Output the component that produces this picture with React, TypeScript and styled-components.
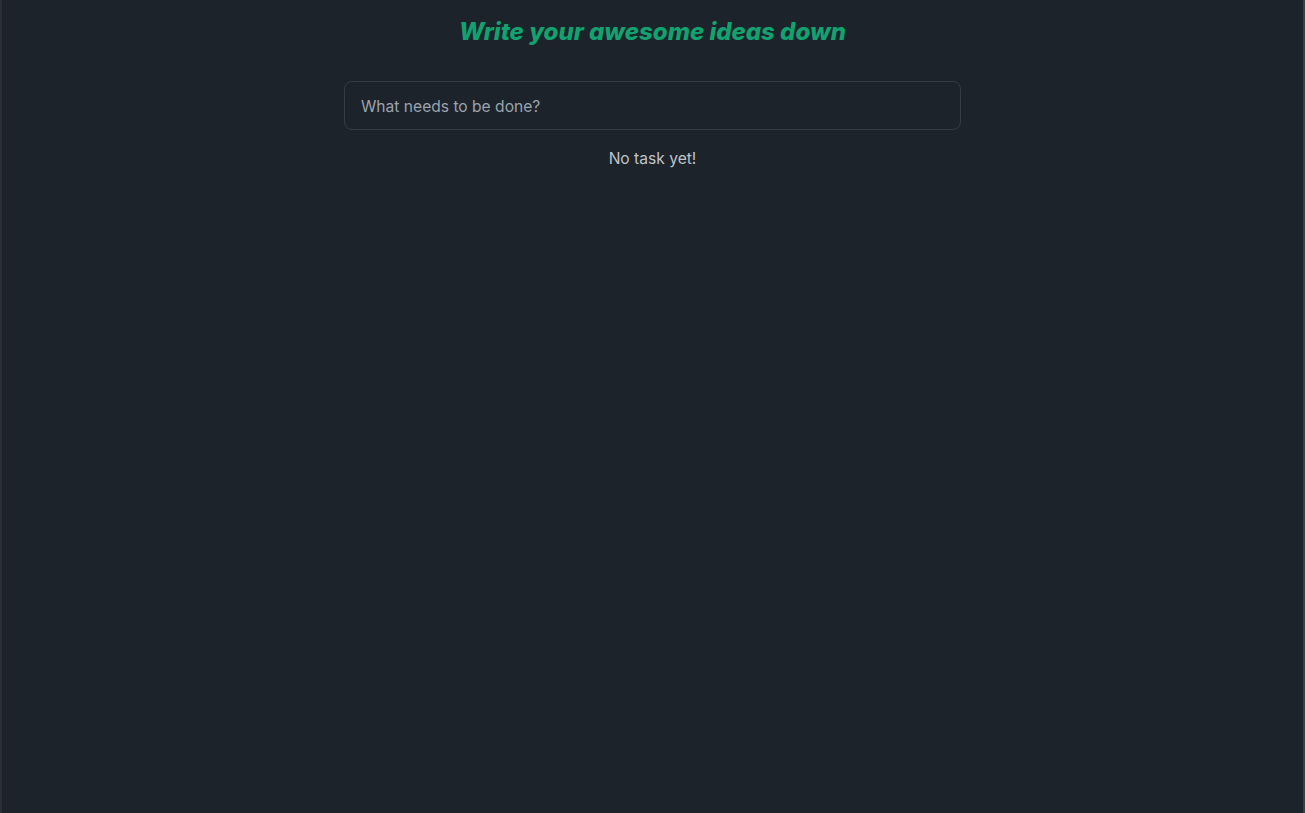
import React, { useState } from "react";
import styled, { createGlobalStyle } from "styled-components";

const Global = createGlobalStyle`
  html, body { margin: 0; padding: 0; background: #1d232b; }
  * { box-sizing: border-box; }
  #root { min-height: 100vh; }
`;

const Page = styled.div`
  min-height: 100vh;
  background: #1d232b;
  border-left: 2px solid #2b3038;
  border-right: 2px solid #3a3f46;
  font-family: Inter, "Noto Sans", sans-serif;
  display: flex;
  flex-direction: column;
  align-items: center;
  padding-top: 17px;
`;

const Title = styled.h1`
  margin: 0;
  font-size: 24px;
  line-height: 30px;
  font-weight: 800;
  font-style: italic;
  color: #12a26f;
`;

const Main = styled.main`
  width: 617px;
  margin-top: 34px;
  display: flex;
  flex-direction: column;
  align-items: stretch;
`;

const TaskInput = styled.input`
  height: 49px;
  width: 100%;
  background: transparent;
  border: 1px solid #363c45;
  border-radius: 8px;
  padding: 2px 16px 0;
  font-family: inherit;
  font-size: 15.6px;
  color: #d1d5db;
  outline: none;
  &::placeholder { color: #9aa3ae; }
`;

const Empty = styled.p`
  margin: 18px 0 0;
  text-align: center;
  font-size: 15.6px;
  line-height: 22px;
  color: #bfc3c9;
`;

export default function App() {
  const [value, setValue] = useState("");
  return (
    <>
      <Global />
      <Page>
        <Title>Write your awesome ideas down</Title>
        <Main>
          <TaskInput
            placeholder="What needs to be done?"
            value={value}
            onChange={(e) => setValue(e.target.value)}
          />
          <Empty>No task yet!</Empty>
        </Main>
      </Page>
    </>
  );
}
